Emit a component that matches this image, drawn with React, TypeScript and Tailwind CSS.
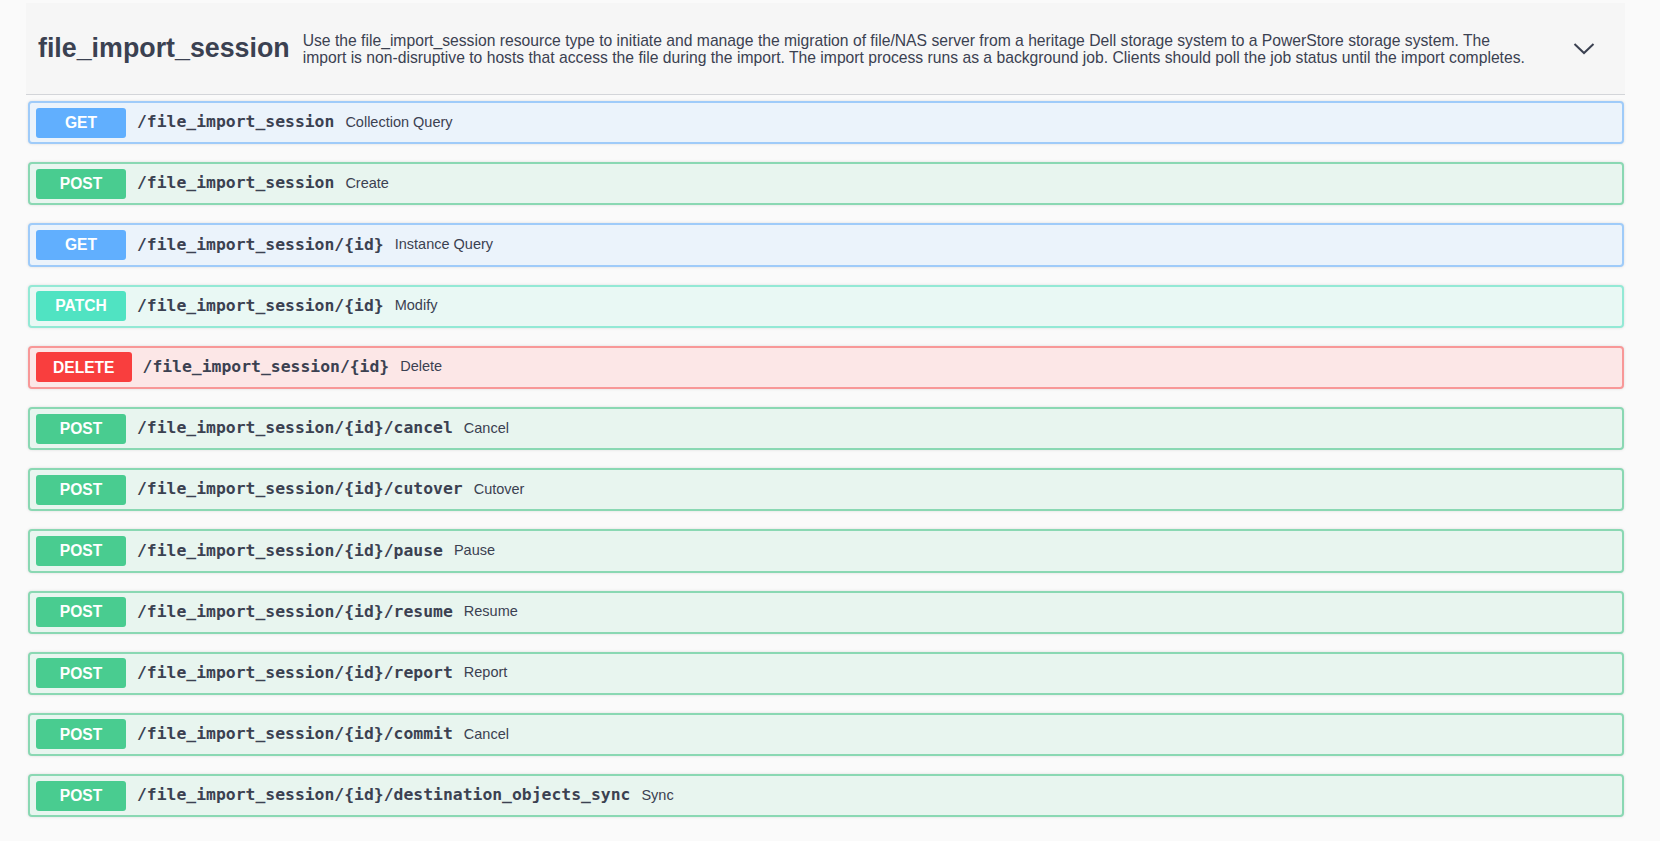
import React from "react";

type Op = { method: "GET" | "POST" | "PATCH" | "DELETE"; path: string; desc: string };

const ops: Op[] = [
  { method: "GET", path: "/file_import_session", desc: "Collection Query" },
  { method: "POST", path: "/file_import_session", desc: "Create" },
  { method: "GET", path: "/file_import_session/{id}", desc: "Instance Query" },
  { method: "PATCH", path: "/file_import_session/{id}", desc: "Modify" },
  { method: "DELETE", path: "/file_import_session/{id}", desc: "Delete" },
  { method: "POST", path: "/file_import_session/{id}/cancel", desc: "Cancel" },
  { method: "POST", path: "/file_import_session/{id}/cutover", desc: "Cutover" },
  { method: "POST", path: "/file_import_session/{id}/pause", desc: "Pause" },
  { method: "POST", path: "/file_import_session/{id}/resume", desc: "Resume" },
  { method: "POST", path: "/file_import_session/{id}/report", desc: "Report" },
  { method: "POST", path: "/file_import_session/{id}/commit", desc: "Cancel" },
  { method: "POST", path: "/file_import_session/{id}/destination_objects_sync", desc: "Sync" },
];

const rowStyles: Record<Op["method"], { row: string; badge: string }> = {
  GET: { row: "bg-[#ebf3fb] border-[#9fcbf9]", badge: "bg-[#61affe]" },
  POST: { row: "bg-[#e8f5ef] border-[#8ad8b3]", badge: "bg-[#49cc90]" },
  PATCH: { row: "bg-[#e9f8f4] border-[#93e9d5]", badge: "bg-[#50e3c2]" },
  DELETE: { row: "bg-[#fce7e7] border-[#f89898]", badge: "bg-[#f93e3e]" },
};

function Row({ op }: { op: Op }) {
  const s = rowStyles[op.method];
  return (
    <div
      className={`flex items-center h-[43.2px] rounded-[4px] border-2 pl-[6px] shadow-[0_0_3px_rgba(0,0,0,0.12)] ${s.row}`}
    >
      <div
        className={`flex items-center justify-center h-[30px] min-w-[90px] px-[17px] rounded-[3px] text-white text-[15.6px] font-bold font-['Liberation_Sans',Arial,sans-serif] ${s.badge}`}
      >
        {op.method}
      </div>
      <span className="ml-[11px] text-[16.4px] font-semibold text-[#3b4151] font-['DejaVu_Sans_Mono',monospace] whitespace-nowrap">
        {op.path}
      </span>
      <span className="ml-[11px] text-[14.5px] text-[#3b4151] font-['Liberation_Sans',Arial,sans-serif] whitespace-nowrap">
        {op.desc}
      </span>
    </div>
  );
}

export default function App() {
  return (
    <div className="min-h-screen bg-[#fafafa] pl-[26px] pr-[35px] pt-[3px] pb-[24px]">
      <div className="flex items-center h-[92px] border-b border-[#d3d5d9] bg-[#f6f6f6] pl-[12px] pr-[30px]">
        <div className="text-[26.8px] font-bold text-[#3b4151] font-['Liberation_Sans',Arial,sans-serif] whitespace-nowrap leading-none">
          file_import_session
        </div>
        <div className="ml-[13px] w-[1250px] text-[15.7px] leading-[17px] text-[#3b4151] font-['Liberation_Sans',Arial,sans-serif] whitespace-nowrap">
          Use the file_import_session resource type to initiate and manage the migration of file/NAS server from a
          heritage Dell storage system to a PowerStore storage system. The
          <br />
          import is non-disruptive to hosts that access the file during the import. The import process runs as a
          background job. Clients should poll the job status until the import completes.
        </div>
        <div className="ml-auto">
          <svg width="22" height="14" viewBox="0 0 22 14" fill="none">
            <polyline points="1.5,2 11,11 20.5,2" stroke="#3b4151" strokeWidth="2" fill="none" />
          </svg>
        </div>
      </div>
      <div className="mt-[6px] pl-[2px] pr-[1px] flex flex-col gap-[18px]">
        {ops.map((op, i) => (
          <Row key={i} op={op} />
        ))}
      </div>
    </div>
  );
}
